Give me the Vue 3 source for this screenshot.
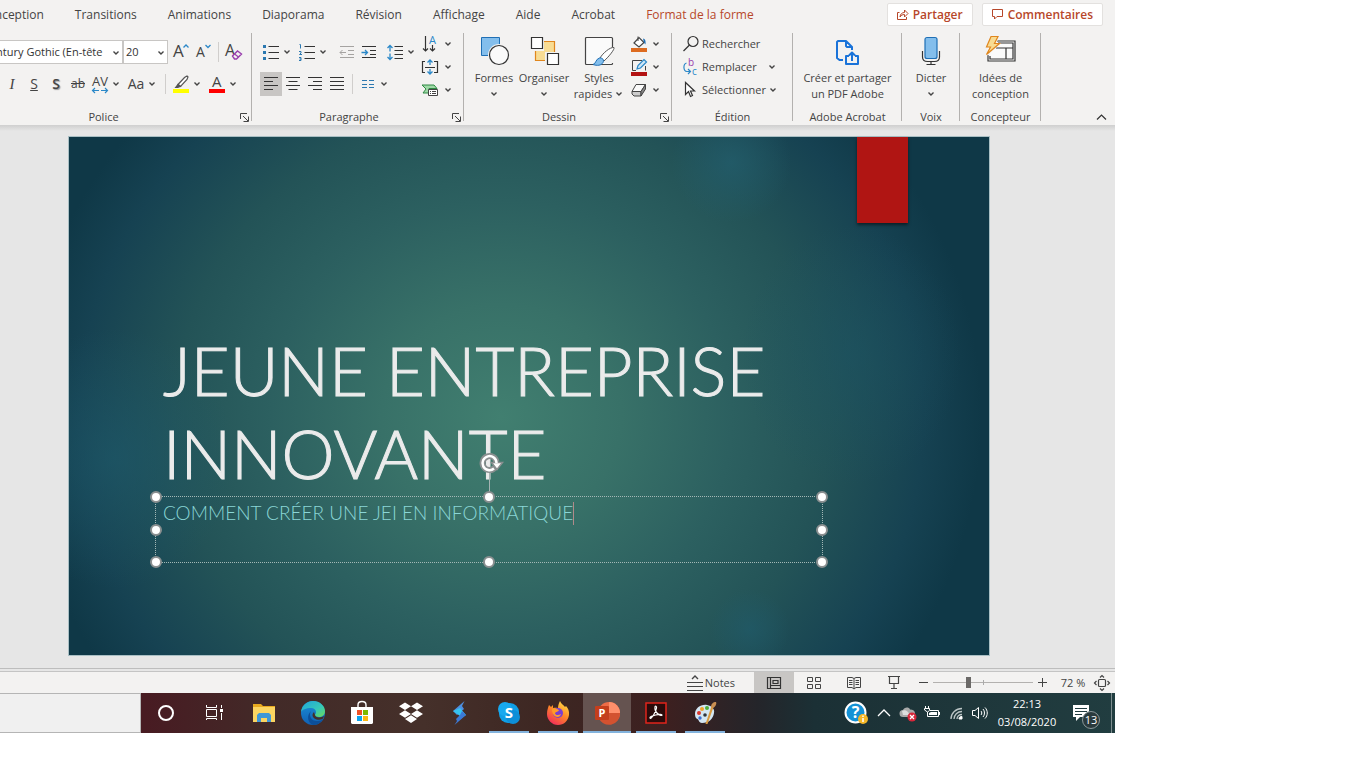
<script setup>
import { ref } from 'vue'

const tabs = ['Conception', 'Transitions', 'Animations', 'Diaporama', 'Révision', 'Affichage', 'Aide', 'Acrobat', 'Format de la forme']
const activeTab = ref('Format de la forme')

const view = ref('normal')
const zoom = ref(35)
const align = ref('left')

const handles = ['nw', 'n', 'ne', 'w', 'e', 'sw', 's', 'se']
</script>

<template>
  <!-- shared glyphs -->
  <svg class="sprite" aria-hidden="true">
    <symbol id="caret" viewBox="-1 -1 10 10"><path d="M1.500 2.500 4 5l2.500-2.500" fill="none" stroke="#444" stroke-width="1.400" /></symbol>
    <symbol id="launcher" viewBox="0 0 9 9"><path d="M.5 6V.5H7M3 3l5 5M8.500 3.500v5h-5" fill="none" stroke="#444" /></symbol>
  </svg>

  <div class="app">
    <header class="tabs">
      <nav class="tab-list">
        <a v-for="tab in tabs" :key="tab" href="#" :class="{ active: tab === activeTab }" @click.prevent="activeTab = tab">{{ tab }}</a>
      </nav>
      <div class="share">
        <button type="button">
          <svg width="13" height="13" viewBox="0 0 13 13" fill="none" stroke="#b7472a"><path d="M3.500 4.500h-2v7h9V9M4 9c.3-3 2-4.500 4.500-4.500V2L12 5.500 8.500 9V6.500C6.500 6.500 5 7.300 4 9z" /></svg>
          Partager
        </button>
        <button type="button">
          <svg width="13" height="13" viewBox="0 0 13 13" fill="none" stroke="#b7472a"><path d="M1.500 1.500h10v7H6L3.500 11V8.500h-2z" /></svg>
          Commentaires
        </button>
      </div>
    </header>

    <div class="ribbon">
      <!-- Police -->
      <section class="group font-group">
        <div class="body rows">
          <div class="row font-row">
            <div class="combo font-name">
              <select aria-label="Police"><option>Century Gothic (En-tête</option></select>
              <svg class="caret"><use href="#caret" /></svg>
            </div>
            <div class="combo font-size">
              <select aria-label="Taille de police"><option>20</option></select>
              <svg class="caret"><use href="#caret" /></svg>
            </div>
            <button class="tool" type="button" aria-label="Augmenter la taille">
              <svg width="20" height="20" viewBox="0 0 20 20"><text x="2" y="15" font-size="17" fill="#444">A</text><path d="m12.500 5.500 2.500-2.500 2.500 2.500" fill="none" stroke="#2b88c8" stroke-width="1.300" /></svg>
            </button>
            <button class="tool" type="button" aria-label="Réduire la taille">
              <svg width="20" height="20" viewBox="0 0 20 20"><text x="3" y="15" font-size="14" fill="#444">A</text><path d="m12.500 3 2.500 2.500L17.500 3" fill="none" stroke="#2b88c8" stroke-width="1.300" /></svg>
            </button>
            <i class="sep"></i>
            <button class="tool" type="button" aria-label="Effacer la mise en forme">
              <svg width="20" height="20" viewBox="0 0 20 20"><text x="1" y="14" font-size="16" fill="#444">A</text><path d="m8.500 14 5-5 4 3-5 5h-2z" fill="#f3f2f1" stroke="#9a3fae" stroke-width="1.400" /><path d="m10.500 12 4 3" stroke="#9a3fae" stroke-width="1.300" /></svg>
            </button>
          </div>
          <div class="row style-row">
            <button class="tool italic" type="button">I</button>
            <button class="tool underline" type="button">S</button>
            <button class="tool shadow" type="button">S</button>
            <button class="tool strike" type="button">ab</button>
            <button class="tool" type="button" aria-label="Espacement des caractères">
              <svg width="20" height="20" viewBox="0 0 20 20"><text x="2" y="12" font-size="13" fill="#444">AV</text><path d="M2.500 16.500H9M5 14l-2.500 2.500L5 19M11 16.500h6.500M15 14l2.500 2.500L15 19" fill="none" stroke="#2b88c8" stroke-width="1.200" /></svg>
            </button>
            <svg class="caret"><use href="#caret" /></svg>
            <button class="tool case" type="button">Aa</button>
            <svg class="caret"><use href="#caret" /></svg>
            <i class="sep"></i>
            <button class="tool" type="button" aria-label="Surlignage">
              <svg width="20" height="20" viewBox="0 0 20 20"><path d="M7 10.500 13.500 3.500 16 2l1 1-1 2.500-6.500 7z" fill="#fff" stroke="#555" stroke-width="1.200" /><path d="m7 9.500 3.500 3L7 14H3.500z" fill="#555" /><path d="M2 15h16v4H2z" fill="#ff0" /></svg>
            </button>
            <svg class="caret"><use href="#caret" /></svg>
            <button class="tool color" type="button" aria-label="Couleur de police">
              <svg width="20" height="20" viewBox="0 0 20 20"><text x="5" y="13" font-size="15" fill="#444">A</text><path d="M2 15h16v4H2z" fill="#f00" /></svg>
            </button>
            <svg class="caret"><use href="#caret" /></svg>
          </div>
        </div>
        <footer><span>Police</span><svg class="launcher"><use href="#launcher" /></svg></footer>
      </section>

      <!-- Paragraphe -->
      <section class="group para-group">
        <div class="body split">
          <div class="rows para-rows">
            <div class="row">
              <button class="tool" type="button" aria-label="Puces">
                <svg width="18" height="18" viewBox="0 0 18 18"><path d="M1 2h3v3H1zM1 8h3v3H1zM1 14h3v3H1z" fill="#2b78b0" /><path d="M6.500 3.500H17M6.500 9.500H17M6.500 15.500H17" stroke="#333" /></svg>
              </button>
              <svg class="caret"><use href="#caret" /></svg>
              <button class="tool gap" type="button" aria-label="Numérotation">
                <svg width="18" height="18" viewBox="0 0 18 18" fill="none"><path d="M1.500 1.500h1v4M1 8.500h2v1.500L1.500 11.500H4M1 14.500h2v3H1M1.500 16H3" stroke="#2b78b0" /><path d="M6.500 3.500H17M6.500 9.500H17M6.500 15.500H17" stroke="#333" /></svg>
              </button>
              <svg class="caret"><use href="#caret" /></svg>
              <button class="tool wide-gap" type="button" disabled aria-label="Réduire le retrait">
                <svg width="18" height="18" viewBox="0 0 18 18" fill="none" stroke="#a5a3a1"><path d="M2 3.500h14M10 7.500h6M10 11.500h6M2 14.500h14M8 9.500H2M4.500 7 2 9.500 4.500 12" /></svg>
              </button>
              <button class="tool" type="button" aria-label="Augmenter le retrait">
                <svg width="18" height="18" viewBox="0 0 18 18" fill="none" stroke="#333"><path d="M2 3.500h14M10 7.500h6M10 11.500h6M2 14.500h14" /><path d="M1.500 9.500h6M5 7l2.500 2.500L5 12" stroke="#2b88c8" stroke-width="1.300" /></svg>
              </button>
              <button class="tool gap" type="button" aria-label="Interligne">
                <svg width="18" height="18" viewBox="0 0 18 18" fill="none"><path d="M8.500 3.500H17M8.500 7.500H17M8.500 11.500H17M8.500 15.500H17" stroke="#333" /><path d="M4 2.500v6M1.500 5 4 2.500 6.500 5M4 10.500v6M1.500 14 4 16.500 6.500 14" stroke="#2b88c8" stroke-width="1.300" /></svg>
              </button>
              <svg class="caret"><use href="#caret" /></svg>
            </div>
            <div class="row">
              <button class="tool" type="button" aria-label="Aligner à gauche" :class="{ on: align === 'left' }" @click="align = 'left'">
                <svg width="18" height="18" viewBox="0 0 18 18" stroke="#333"><path d="M2 2.500h14M2 6.500h9M2 10.500h14M2 14.500h9" /></svg>
              </button>
              <button class="tool" type="button" aria-label="Centrer" :class="{ on: align === 'center' }" @click="align = 'center'">
                <svg width="18" height="18" viewBox="0 0 18 18" stroke="#333"><path d="M2 2.500h14M4.500 6.500h9M2 10.500h14M4.500 14.500h9" /></svg>
              </button>
              <button class="tool" type="button" aria-label="Aligner à droite" :class="{ on: align === 'right' }" @click="align = 'right'">
                <svg width="18" height="18" viewBox="0 0 18 18" stroke="#333"><path d="M2 2.500h14M7 6.500h9M2 10.500h14M7 14.500h9" /></svg>
              </button>
              <button class="tool" type="button" aria-label="Justifier" :class="{ on: align === 'justify' }" @click="align = 'justify'">
                <svg width="18" height="18" viewBox="0 0 18 18" stroke="#333"><path d="M2 2.500h14M2 6.500h14M2 10.500h14M2 14.500h14" /></svg>
              </button>
              <i class="sep"></i>
              <button class="tool" type="button" aria-label="Colonnes">
                <svg width="18" height="18" viewBox="0 0 18 18" stroke="#2b78b0"><path d="M3 5.500h5M3 9.500h5M3 12.500h5M10 5.500h5M10 9.500h5M10 12.500h5" /></svg>
              </button>
              <svg class="caret"><use href="#caret" /></svg>
            </div>
          </div>
          <div class="stack">
            <button type="button" class="mini" aria-label="Orientation du texte">
              <svg width="18" height="18" viewBox="0 0 18 18" fill="none"><path d="M4.500 1v15M2 13.500 4.500 16 7 13.500M11.500 10v6M9 13.500l2.500 2.500 2.500-2.500" stroke="#333" stroke-width="1.200" /><text x="8" y="9" font-size="11" fill="#2b88c8">A</text></svg>
              <svg class="caret"><use href="#caret" /></svg>
            </button>
            <button type="button" class="mini" aria-label="Aligner le texte">
              <svg width="18" height="18" viewBox="0 0 18 18" fill="none"><path d="M4 3.500H1.500v11H4M13 3.500h3.500v11H13M4 9.500h10" stroke="#333" stroke-width="1.200" /><path d="M9 2v5M6.500 4.500 9 2l2.500 2.500M9 11v5M6.500 13.500 9 16l2.500-2.500" stroke="#2b88c8" stroke-width="1.300" /></svg>
              <svg class="caret"><use href="#caret" /></svg>
            </button>
            <button type="button" class="mini" aria-label="Convertir en graphique SmartArt">
              <svg width="18" height="18" viewBox="0 0 18 18"><path d="M1 4h12l3 3.500H8V12H2l3-4z" fill="#9fd9a7" stroke="#2f8a44" /><path d="M7.500 8.500h9v6h-9z" fill="#fff" stroke="#444" /><path d="M9 10.500h1M11 10.500h4M9 12.500h1M11 12.500h4" stroke="#444" /></svg>
              <svg class="caret"><use href="#caret" /></svg>
            </button>
          </div>
        </div>
        <footer><span>Paragraphe</span><svg class="launcher"><use href="#launcher" /></svg></footer>
      </section>

      <!-- Dessin -->
      <section class="group draw-group">
        <div class="body split">
          <button type="button" class="big">
            <svg width="32" height="32" viewBox="0 0 32 32"><path d="M3.500 1.500h18v18h-18z" fill="#83beec" stroke="#1f6fb5" /><circle cx="21" cy="19" r="11" fill="#f3f2f1" /><circle cx="21" cy="19" r="9.500" fill="#fafafa" stroke="#333" stroke-width="1.200" /></svg>
            <span>Formes</span>
            <svg class="caret"><use href="#caret" /></svg>
          </button>
          <button type="button" class="big">
            <svg width="32" height="32" viewBox="0 0 32 32"><path d="M7.500 5.500h19v19h-19z" fill="#f8dc93" stroke="#e0861d" stroke-width="1.200" /><path d="M2.500 1.500h12v12h-12zM18.500 17.500h12v12h-12z" fill="#f3f2f1" stroke="#f3f2f1" stroke-width="3" /><path d="M3.500 1.500h11v11h-11zM19.500 17.500h11v11h-11z" fill="#fff" stroke="#333" stroke-width="1.200" /></svg>
            <span>Organiser</span>
            <svg class="caret"><use href="#caret" /></svg>
          </button>
          <button type="button" class="big styles">
            <svg width="32" height="32" viewBox="0 0 32 32"><rect x="2.500" y="1.500" width="27" height="27" rx="1" fill="#fafafa" stroke="#444" stroke-width="1.200" /><path d="M16 23 31 10v17H15z" fill="#f3f2f1" /><path d="M17 22C20 17 27 11 31 11.500c1 1.500-5 9-10 13.500z" fill="#fff" stroke="#555" /><path d="M10 28.500c3-.5 2.500-5.500 6.500-6.500 3-.5 5 2 3.500 4.500-1.500 3-6 3.500-10 2z" fill="#83beec" stroke="#1f6fb5" /></svg>
            <span>Styles</span>
            <span class="with-caret">rapides<svg class="caret"><use href="#caret" /></svg></span>
          </button>
          <div class="stack">
            <button type="button" class="mini" aria-label="Remplissage">
              <svg width="18" height="18" viewBox="0 0 18 18"><path d="m4 8 5-5.500 5 5-5 4.500z" fill="#fff" stroke="#444" stroke-width="1.200" /><path d="M8 6V1.500" stroke="#444" /><path d="M13 3.500c2 0 3 2 2.500 6-1.500-1-2-4-2.500-6z" fill="#1f6fb5" /><path d="M1 13h16v4H1z" fill="#dd6b20" /></svg>
              <svg class="caret"><use href="#caret" /></svg>
            </button>
            <button type="button" class="mini" aria-label="Contour">
              <svg width="18" height="18" viewBox="0 0 18 18"><path d="M12 2.500H2.500v10H6M15.500 8v4.500" fill="none" stroke="#444" /><path d="m7 11 1-3.500 6-6 2.500 2.500-6 6z" fill="#cfe6f7" stroke="#2b88c8" stroke-width="1.200" /><path d="M1 14h16v4H1z" fill="#b31212" /></svg>
              <svg class="caret"><use href="#caret" /></svg>
            </button>
            <button type="button" class="mini" aria-label="Effets">
              <svg width="18" height="18" viewBox="0 0 18 18" stroke="#444" stroke-linejoin="round"><path d="M6 3.500h9.500l-4.500 7H2z" fill="#fafafa" /><path d="M2 10.500h9v4.500H4L2 13z" fill="#ccc" /><path d="m11 10.500 4.500-7V8L11 15z" fill="#888" /></svg>
              <svg class="caret"><use href="#caret" /></svg>
            </button>
          </div>
        </div>
        <footer><span>Dessin</span><svg class="launcher"><use href="#launcher" /></svg></footer>
      </section>

      <!-- Édition -->
      <section class="group edit-group">
        <div class="body stack">
          <button type="button" class="mini">
            <svg width="18" height="18" viewBox="0 0 18 18" fill="none" stroke="#333" stroke-width="1.200"><circle cx="11" cy="6.500" r="5" /><path d="M7.500 10 1.500 16" /></svg>
            Rechercher
          </button>
          <button type="button" class="mini wide">
            <svg width="18" height="18" viewBox="0 0 18 18"><text x="6" y="8" font-size="10" fill="#9a3fae">b</text><text x="10" y="17" font-size="10" fill="#2b88c8">c</text><path d="M4.500 5C1 6 1 13 5 13.500h3M6 11l2.500 2.500L6 16" fill="none" stroke="#2b88c8" stroke-width="1.200" /></svg>
            Remplacer
            <svg class="caret"><use href="#caret" /></svg>
          </button>
          <button type="button" class="mini">
            <svg width="18" height="18" viewBox="0 0 18 18"><path d="M3.500 1.500v12l3-3 2 5 2-1-2-4.500h4z" fill="#fff" stroke="#333" stroke-width="1.200" /></svg>
            Sélectionner
            <svg class="caret"><use href="#caret" /></svg>
          </button>
        </div>
        <footer><span>Édition</span></footer>
      </section>

      <section class="group acrobat-group">
        <div class="body split">
          <button type="button" class="big">
            <svg width="32" height="32" viewBox="0 0 32 32" fill="none" stroke="#1a73d9" stroke-width="2" stroke-linejoin="round"><path d="M12 24H8.500L6 22V6l1-1h8l6 6v3M15 5v5l1 1h5M18 20h-3v8h12v-8h-3M21 25v-8M18 19.500l3-3 3 3" /></svg>
            <span>Créer et partager</span>
            <span>un PDF Adobe</span>
          </button>
        </div>
        <footer><span>Adobe Acrobat</span></footer>
      </section>

      <section class="group voice-group">
        <div class="body split">
          <button type="button" class="big">
            <svg width="32" height="32" viewBox="0 0 32 32" fill="none" stroke="#333" stroke-width="1.200"><rect x="10" y="1.500" width="12" height="21" rx="2" fill="#83beec" stroke="#1f6fb5" /><path d="M7.500 15v6c0 3 2 4.500 5 4.500h7c3 0 5-1.500 5-4.500v-6M16 25.500v3M11.500 28.500h9" /></svg>
            <span>Dicter</span>
            <svg class="caret"><use href="#caret" /></svg>
          </button>
        </div>
        <footer><span>Voix</span></footer>
      </section>

      <section class="group ideas-group">
        <div class="body split">
          <button type="button" class="big">
            <svg width="32" height="32" viewBox="0 0 32 32" fill="none"><path d="M4 5h26v20H2V17z" fill="#fafafa" /><path d="M12 5h18v20H3v-6M13 7h15v16H5v-3M11 12h17M21 12v11" stroke="#333" stroke-width="1.200" /><path d="M6-.5h9.500L11 7h5L2.500 20 6 11.500H1z" fill="#f3f2f1" /><path d="M6 .500h7L9.500 7.500h5L1.500 18.500 5.500 11H1.500z" fill="#f8dc93" stroke="#e0861d" stroke-width="1.200" /></svg>
            <span>Idées de</span>
            <span>conception</span>
          </button>
        </div>
        <footer><span>Concepteur</span></footer>
      </section>

      <button type="button" class="collapse" aria-label="Réduire le ruban">
        <svg width="11" height="8" viewBox="0 0 11 8"><path d="m1 6.500 4.500-4.500L10 6.500" fill="none" stroke="#333" stroke-width="1.200" /></svg>
      </button>
    </div>

    <main class="workspace">
      <article class="slide">
        <div class="ribbon-mark"></div>
        <h1>JEUNE ENTREPRISE<br />INNOVANTE</h1>
        <div class="textbox">
          <p>COMMENT CRÉER UNE JEI EN INFORMATIQUE<i class="cursor"></i></p>
          <i class="stem"></i>
          <svg class="rotate" width="24" height="24" viewBox="0 0 24 24" fill="none"><path d="M17 15.500A7 7 0 1 1 18.500 10" stroke="#8a8f90" stroke-width="6" /><path d="M13.500 10.500h11l-5.500 7z" fill="#fff" stroke="#8a8f90" stroke-width="1.500" /><path d="M16 16.500A7 7 0 1 1 18.500 11" stroke="#fff" stroke-width="2.500" /></svg>
          <i v-for="h in handles" :key="h" class="handle" :class="h"></i>
        </div>
      </article>
    </main>

    <div class="status">
      <button type="button" class="notes">
        <svg width="16" height="18" viewBox="0 0 16 18" fill="none" stroke="#444"><path d="M0 8.500h16M0 12.500h16M0 16.500h16" /><path d="M5 5l3-3 3 3" stroke-width="1.400" /></svg>
        Notes
      </button>
      <button type="button" class="view" aria-label="Normal" :class="{ on: view === 'normal' }" @click="view = 'normal'">
        <svg width="16" height="16" viewBox="0 0 16 16" fill="none" stroke="#333" stroke-width="1.200"><path d="M1.500 2.500h13v11h-13zM4.500 2.500v11M4.500 10.500h10M7 5.500h5v3H7z" /></svg>
      </button>
      <button type="button" class="view" aria-label="Trieuse de diapositives" :class="{ on: view === 'sorter' }" @click="view = 'sorter'">
        <svg width="16" height="16" viewBox="0 0 16 16" fill="none" stroke="#444"><path d="M1.500 2.500h5v4h-5zM9.500 2.500h5v4h-5zM1.500 9.500h5v4h-5zM9.500 9.500h5v4h-5z" /></svg>
      </button>
      <button type="button" class="view" aria-label="Mode Lecture" :class="{ on: view === 'reading' }" @click="view = 'reading'">
        <svg width="16" height="16" viewBox="0 0 16 16" fill="none" stroke="#444"><path d="M1.500 2.500H6L8 3.500l2-1h4.500v10H10L8 14l-2-1.500H1.500zM8 3.500V14M3 5.500h3.500M3 7.500h3.500M3 9.500h3.500M9.500 5.500H13M9.500 7.500H13M9.500 9.500H13" /></svg>
      </button>
      <button type="button" class="view" aria-label="Diaporama" :class="{ on: view === 'show' }" @click="view = 'show'">
        <svg width="16" height="16" viewBox="0 0 16 16" fill="none" stroke="#444"><path d="M2 1.500h12M3.500 1.500v7h9v-7M8 8.500v5M5 13.500h6" stroke-width="1.200" /></svg>
      </button>
      <button type="button" class="step" aria-label="Zoom arrière"><svg width="9" height="9" viewBox="0 0 9 9"><path d="M0 4.500h9" stroke="#444" /></svg></button>
      <input v-model="zoom" class="zoom" type="range" min="0" max="100" aria-label="Zoom" />
      <button type="button" class="step" aria-label="Zoom avant"><svg width="9" height="9" viewBox="0 0 9 9"><path d="M0 4.500h9M4.500 0v9" stroke="#444" /></svg></button>
      <span class="percent">72 %</span>
      <button type="button" class="fit" aria-label="Ajuster à la fenêtre">
        <svg width="16" height="16" viewBox="0 0 16 16" fill="none" stroke="#444" stroke-width="1.200"><rect x="4.500" y="4.500" width="7" height="7" rx="1" /><path d="m6 2.500 2-2 2 2M6 13.500l2 2 2-2M2.500 6l-2 2 2 2M13.500 6l2 2-2 2" /></svg>
      </button>
    </div>

    <footer class="taskbar">
      <input class="search" type="search" aria-label="Rechercher" />
      <button type="button" class="task" aria-label="Cortana"><svg width="24" height="24" viewBox="0 0 24 24"><circle cx="12" cy="12" r="7" fill="none" stroke="#fff" stroke-width="2" /></svg></button>
      <button type="button" class="task" aria-label="Affichage des tâches"><svg width="24" height="24" viewBox="0 0 24 24" fill="none" stroke="#fff"><path d="M3.500 4v2.500h10V4M3.500 8.500h10v7h-10zM3.500 19v-1.500h10V19M18.500 4v3M18.500 12v7" /><path d="M17 8h3v3h-3z" fill="#fff" stroke="none" /></svg></button>
      <button type="button" class="task" aria-label="Explorateur de fichiers"><svg width="24" height="24" viewBox="0 0 24 24"><path d="M1 3h8l2 2h12v16H1z" fill="#e8a91f" /><path d="M1 6h22v15H1z" fill="#fbd562" /><path d="M5 21v-7l2-2h10l2 2v7h-4v-4H9v4z" fill="#3f98d8" /></svg></button>
      <button type="button" class="task" aria-label="Microsoft Edge">
        <svg width="24" height="24" viewBox="0 0 24 24">
          <defs>
            <linearGradient id="edge-a" x1="0" y1="0" x2="1" y2="1"><stop offset="0" stop-color="#1fa3dc" /><stop offset=".6" stop-color="#36c9b8" /><stop offset="1" stop-color="#6fdc55" /></linearGradient>
            <linearGradient id="edge-b" x1="0" y1="0" x2="0" y2="1"><stop offset="0" stop-color="#1b8fd8" /><stop offset="1" stop-color="#1160b4" /></linearGradient>
          </defs>
          <circle cx="12" cy="12" r="12" fill="url(#edge-b)" />
          <path d="M0 11C1 4 6 0 12 0c7 0 12 5 12 10 0 4-3 6-6 6-2 0-4-1-4-2 0-.5 1-1 1-3 0-2-2-4-5-4C5 7 1 9 0 11z" fill="url(#edge-a)" />
          <path d="M10 10c-3 5 1 11 7 10 2 0 4-1 5-2-2 4-6 6-10 6C7 22 5 15 10 10z" fill="#0c4f9a" />
          <path d="M14 14c0 3 6 3 9.500 1L21.500 18c-4 2-10 0-10-4 0-1 .5-2 1.500-3z" fill="#43302a" />
        </svg>
      </button>
      <button type="button" class="task" aria-label="Microsoft Store"><svg width="24" height="24" viewBox="0 0 24 24"><path d="M8 7V4c0-2 1.500-3.500 4-3.500S16 2 16 4v3" fill="none" stroke="#fff" stroke-width="1.400" /><path d="M1 6h22v16l-1 1H2l-1-1z" fill="#fff" /><path d="M7 9h5v5H7z" fill="#f05125" /><path d="M13 9h5v5h-5z" fill="#7eb900" /><path d="M7 15h5v5H7z" fill="#0aa4ee" /><path d="M13 15h5v5h-5z" fill="#fdb813" /></svg></button>
      <button type="button" class="task" aria-label="Dropbox"><svg width="24" height="24" viewBox="0 0 24 24"><path d="m6 1.500 6 3.800-6 3.800-6-3.800zM18 1.500l6 3.800-6 3.800-6-3.800zM6 9.200l6 3.800-6 3.800L0 13zM18 9.200l6 3.800-6 3.800-6-3.800zM12 14.300l6 3.700-6 4-6-4z" fill="#fff" /></svg></button>
      <button type="button" class="task" aria-label="Éclair"><svg width="24" height="24" viewBox="0 0 24 24"><path d="M16.500 0 5 10l4 4 7-6-2-3z" fill="#4d8fe0" /><path d="M5 10l7-3 6 7-7 5-2-1 3-3z" fill="#35c4f0" /><path d="M6.500 24 18 14l-4-4-2 4-4 4 1 2z" fill="#3b79d5" /></svg></button>
      <button type="button" class="task open" aria-label="Skype"><svg width="24" height="24" viewBox="0 0 24 24"><rect x="2" y="2" width="20" height="20" rx="9" fill="#0f9fe6" /><circle cx="8" cy="8" r="7" fill="#18a9ef" /><circle cx="16" cy="16" r="7" fill="#0d8fd8" /><text x="12" y="17" font-size="15" font-weight="700" fill="#fff" text-anchor="middle">S</text></svg></button>
      <button type="button" class="task open" aria-label="Firefox">
        <svg width="24" height="24" viewBox="0 0 24 24">
          <defs><linearGradient id="fox" x1=".8" y1="0" x2=".2" y2="1"><stop offset="0" stop-color="#ffe14a" /><stop offset=".45" stop-color="#ff8a25" /><stop offset="1" stop-color="#f0265f" /></linearGradient></defs>
          <path d="M14 0c1 3 4 4 5 6l1-1c2 2 3.500 5 3 9-1 6-5 10-11 10S1 19 1 13c0-4 1-6 2-9l2 2 2-2v3c2-.5 3-.5 5 0 0-3 1-5 2-7z" fill="url(#fox)" />
          <circle cx="12" cy="12" r="5" fill="#7a3fd0" /><path d="M6 8c3-1 6 0 7 1.500-1 1.500-3 1-4 2.500 0 2 3 3 6 1-1 5-9 4-9-5z" fill="#ff9a2a" />
        </svg>
      </button>
      <button type="button" class="task open active" aria-label="PowerPoint"><svg width="26" height="24" viewBox="0 0 26 24"><circle cx="15" cy="12" r="11" fill="#ed6c47" /><path d="M15 1a11 11 0 0 1 11 11H15z" fill="#ff8f6b" /><path d="M4.500 16A11 11 0 0 0 26 12H15z" fill="#d35230" /><rect x="1" y="5" width="14" height="14" rx="1" fill="#c43e1c" /><text x="8" y="16" font-size="11" font-weight="700" fill="#fff" text-anchor="middle">P</text></svg></button>
      <button type="button" class="task open" aria-label="Acrobat"><svg width="24" height="24" viewBox="0 0 24 24" fill="none"><path d="M2 2h20v20H2z" fill="#2a0b0b" stroke="#e0241b" stroke-width="1.500" /><path d="M6 17c-1-2 12-5 12-3 0 2-8-2-7-8 0-1.500 2-1 1.500 1C12 11 7 19 6 17z" stroke="#fff" stroke-width="1.200" /></svg></button>
      <button type="button" class="task open" aria-label="Paint"><svg width="24" height="24" viewBox="0 0 24 24"><path d="M2 13C2 7 8 3 14 4c5 1 8 4 7 8-1 6-5 10-12 10-3 0-3-3-4.500-4C3 17.500 2 16 2 13z" fill="#d3e6f2" /><circle cx="6" cy="12" r="2" fill="#d9382e" /><circle cx="9" cy="8" r="2" fill="#f2a32b" /><circle cx="14" cy="7" r="2" fill="#4fae3a" /><circle cx="7" cy="17" r="1.700" fill="#3d6fd0" /><circle cx="12" cy="14" r="1.800" fill="#31363a" /><path d="m12.500 23 6-18 2 1-6 17z" fill="#d99a3e" /><path d="M18 6c0-3 2-5 5-5 1 2-1 5-3 6z" fill="#c98f52" /></svg></button>

      <div class="tray">
        <svg class="help" width="24" height="24" viewBox="0 0 24 24"><circle cx="11.500" cy="11.500" r="10" fill="#1491d5" stroke="#fff" stroke-width="2" /><text x="11.500" y="17" font-size="16" font-weight="700" fill="#fff" text-anchor="middle">?</text><circle cx="19" cy="18" r="5" fill="#f4b728" /><path d="M19 17v4M19 14.500V16" stroke="#fff" stroke-width="1.500" /></svg>
        <svg width="18" height="18" viewBox="0 0 18 18"><path d="m3 12 6-6 6 6" fill="none" stroke="#fff" stroke-width="1.300" /></svg>
        <svg width="18" height="18" viewBox="0 0 18 18"><path d="M4 13a3.500 3.500 0 0 1 0-7c1-3 6-3.500 7-.5 3 0 5 1.500 5 4s-1 3.500-3 3.500z" fill="#aaa" /><path d="M3 7c3-2 6 0 8 4H4" fill="#ddd" /><circle cx="13" cy="13" r="4.500" fill="#d7263a" /><path d="m11 11 4 4M15 11l-4 4" stroke="#fff" stroke-width="1.300" /></svg>
        <svg width="18" height="18" viewBox="0 0 18 18" fill="none" stroke="#fff"><path d="M7 6.500h8.500v6h-11V10M16.500 8v3" /><path d="M8 8h6v3H6V9z" fill="#fff" stroke="none" /><path d="M2.500 2v2M5.500 2v2M1.500 4.500h5v2l-2 1.500V10M1.500 4.500V6l3 2" /></svg>
        <svg width="18" height="18" viewBox="0 0 18 18" fill="none" stroke="#bcc5c6"><path d="M4 15C4 9 9 4.500 15 4.500M7 15c0-4 3.500-7.500 8-7.500M10 15c0-2.500 2-4.500 5-4.500" stroke-width="1.300" /><path d="M12 15c0-2 1-2.500 3-2.500V15z" fill="#fff" stroke="#fff" /></svg>
        <svg width="18" height="18" viewBox="0 0 18 18" fill="none" stroke="#fff"><path d="M1.500 6.500H4L7.500 3.500v11L4 11.500H1.500zM10 7c1 1 1 3 0 4M12 5c2 2 2 6 0 8M14 3.500c3 3 3 8 0 11" /></svg>
        <time class="clock"><span>22:13</span><span>03/08/2020</span></time>
        <button type="button" class="notif" aria-label="Notifications">
          <svg width="18" height="18" viewBox="0 0 18 18"><path d="M1 1h16v12H8l-4 4v-4H1z" fill="#fff" /><path d="M3 4.500h12M3 7.500h12M3 10.500h7" stroke="#203b3f" /></svg>
          <b>13</b>
        </button>
        <i class="desktop"></i>
      </div>
    </footer>
  </div>
</template>

<style>
body {
  margin: 0;
  background: #fff;
}
</style>

<style scoped>
* {
  box-sizing: border-box;
}
.sprite {
  display: none;
}
.app {
  margin-right: 251px;
  overflow: hidden;
  font-family: 'Open Sans', 'Noto Sans', sans-serif;
  font-size: 12px;
  line-height: 16px;
  color: #444;
  background: #f3f2f1;
}
button {
  display: flex;
  align-items: center;
  justify-content: center;
  padding: 0;
  border: 0;
  background: none;
  font: inherit;
  color: inherit;
}
svg {
  flex: none;
  display: block;
  overflow: visible;
}
i {
  font-style: normal;
}

/* tabs */
.tabs {
  display: flex;
  justify-content: space-between;
  height: 32px;
  padding-right: 12px;
}
.tab-list {
  display: flex;
  gap: 31px;
  margin-left: -20px;
  line-height: 29px;
}
.tab-list a {
  color: #444;
  text-decoration: none;
  white-space: nowrap;
}
.tab-list a.active {
  color: #b7472a;
}
.share {
  display: flex;
  gap: 9px;
  padding: 3px 0 6px;
}
.share button {
  gap: 4px;
  padding: 0 9px 0 8px;
  border: 1px solid #e3e1df;
  border-radius: 2px;
  background: #fff;
  color: #b7472a;
  font-weight: 600;
}

/* ribbon */
.ribbon {
  display: flex;
  height: 93px;
  font-size: 11px;
}
.group {
  display: flex;
  flex: none;
  flex-direction: column;
  background: linear-gradient(#b3b1af, #b3b1af) right 1px / 1px 88px no-repeat;
}
.font-group { width: 297px; margin-left: -45px; }
.para-group { width: 212px; }
.draw-group { width: 208px; }
.edit-group { width: 121px; }
.acrobat-group { width: 109px; }
.voice-group { width: 58px; }
.ideas-group { width: 81px; }
.body {
  height: 77px;
}
.group footer {
  position: relative;
  text-align: center;
}
.para-group footer,
.draw-group footer {
  padding-right: 18px;
}
.launcher {
  position: absolute;
  right: 3px;
  top: 4px;
  width: 9px;
  height: 9px;
}
.caret {
  width: 10px;
  height: 10px;
}
.split {
  display: flex;
}
.rows {
  display: flex;
  flex-direction: column;
  gap: 8px;
  padding-top: 8px;
}
.row {
  display: flex;
  align-items: center;
  height: 24px;
}
.font-row { padding-left: 25px; }
.style-row { padding-left: 46px; }
.style-row .sep { margin-left: 8px; }
.para-rows { width: 169px; padding-left: 8px; }
.tool {
  width: 22px;
  height: 24px;
}
.tool.on {
  background: #c8c6c4;
}
.gap {
  margin-left: 4px;
}
.wide-gap {
  margin-left: 8px;
}
.sep {
  width: 1px;
  height: 20px;
  margin: 0 4px;
  background: #d0cecc;
}
.combo {
  position: relative;
  display: flex;
  height: 24px;
  border: 1px solid #c8c6c4;
  background: #fff;
}
.combo select {
  width: 100%;
  padding: 0 0 0 2px;
  border: 0;
  appearance: none;
  background: none;
  font: inherit;
  color: #333;
}
.combo .caret {
  position: absolute;
  right: 1px;
  top: 7px;
}
.font-name { width: 143px; }
.font-size { width: 45px; margin-right: 2px; }
.italic { font-family: 'Liberation Serif', serif; font-size: 15px; font-style: italic; }
.underline { font-size: 14px; text-decoration: underline; }
.shadow { font-size: 14px; font-weight: 600; text-shadow: 1px 1px 1px #999; }
.strike { font-size: 12px; text-decoration: line-through; }
.case { margin-left: 4px; font-size: 14px; }
.color { margin-left: 4px; }

.stack {
  display: flex;
  flex-direction: column;
}
.mini {
  justify-content: flex-start;
  height: 23px;
  gap: 2px;
}
.para-group .mini {
  gap: 4px;
}
.draw-group .stack {
  padding-left: 1px;
}
.draw-group .mini {
  gap: 3px;
}
.edit-group .stack {
  padding-left: 10px;
}
.edit-group .wide .caret {
  margin-left: 8px;
}
.big {
  flex-direction: column;
  justify-content: flex-start;
  align-self: flex-start;
  padding-top: 4px;
  white-space: nowrap;
}
.big > svg:first-child {
  margin-bottom: 2px;
}
.big > .caret {
  margin-top: 3px;
}
.with-caret {
  display: flex;
  align-items: center;
  gap: 2px;
}
.draw-group .split {
  padding-left: 5px;
}
.draw-group .big {
  width: 50px;
}
.draw-group .styles {
  width: 60px;
}
.acrobat-group .split,
.voice-group .split,
.ideas-group .split {
  justify-content: center;
}
.collapse {
  align-self: flex-end;
  width: 20px;
  height: 16px;
  margin: 0 4px 0 auto;
}

/* slide area */
.workspace {
  padding: 11px 125px 12px 68px;
  border-bottom: 1px solid #bdbdbd;
  background: linear-gradient(#cfcfcf, #e6e6e6 6px);
}
.slide {
  position: relative;
  aspect-ratio: 461 / 260;
  border: 1px solid #a9bfc4;
  background:
    radial-gradient(circle 60px at 72% 5%, rgba(35, 95, 110, 0.7), rgba(35, 95, 110, 0)),
    radial-gradient(circle 40px at 74% 95%, rgba(32, 92, 108, 0.6), rgba(32, 92, 108, 0)),
    radial-gradient(ellipse 110px 130px at 85% 42%, rgba(28, 84, 100, 0.5), rgba(28, 84, 100, 0)),
    radial-gradient(ellipse 120px 130px at 5% 62%, rgba(30, 90, 108, 0.6), rgba(30, 90, 108, 0)),
    radial-gradient(ellipse 480px 450px at 47% 54%, #417f70 0%, #387168 25%, #2c6060 48%, #235357 68%, #164252 88%, #0f3847 100%);
}
.ribbon-mark {
  position: absolute;
  top: 0;
  left: 788px;
  width: 51px;
  height: 86px;
  background: #b01513;
  box-shadow: 0 2px 3px rgba(0, 0, 0, 0.5);
}
h1 {
  position: absolute;
  top: 192px;
  left: 94px;
  margin: 0;
  font-family: Lato, sans-serif;
  font-size: 67px;
  font-weight: 300;
  line-height: 83px;
  color: #ebebeb;
  -webkit-text-stroke: 1px #ebebeb;
  white-space: nowrap;
}
.textbox {
  position: absolute;
  top: 359px;
  left: 86px;
  width: 668px;
  height: 67px;
  border: 1px dotted #a3b8b6;
}
.textbox p {
  display: flex;
  align-items: center;
  margin: 4px 0 0 7px;
  font-family: Lato, sans-serif;
  font-size: 19px;
  font-weight: 300;
  line-height: 24px;
  color: #8ad6d6;
  white-space: nowrap;
}
.cursor {
  width: 1px;
  height: 23px;
  background: #b08a8a;
}
.handle {
  position: absolute;
  width: 12px;
  height: 12px;
  margin: -6px;
  border: 2px solid #8a8f90;
  border-radius: 50%;
  background: #fff;
}
.nw, .n, .ne { top: 0; }
.w, .e { top: 50%; }
.sw, .s, .se { top: 100%; }
.nw, .w, .sw { left: 0; }
.n, .s { left: 50%; }
.ne, .e, .se { left: 100%; }
.stem {
  position: absolute;
  left: 50%;
  top: -24px;
  width: 1px;
  height: 20px;
  background: #a5b3b2;
}
.rotate {
  position: absolute;
  left: 50%;
  top: -45px;
  margin-left: -11px;
}

/* status bar */
.status {
  display: flex;
  align-items: center;
  justify-content: flex-end;
  height: 24px;
  padding: 3px 5px 0 0;
  background: linear-gradient(#e6e6e6 2px, #c4c4c4 2px, #c4c4c4 3px, #f3f2f1 3px);
  font-size: 11px;
}
.notes {
  gap: 2px;
  margin-right: 19px;
}
.view {
  width: 40px;
  height: 21px;
}
.view.on {
  background: #c8c6c4;
}
.step {
  width: 19px;
  height: 20px;
}
.zoom {
  width: 100px;
  height: 20px;
  margin: 0;
  appearance: none;
  background:
    linear-gradient(#aaa, #aaa) 50px 50% / 1px 5px no-repeat,
    linear-gradient(#b3b1af, #b3b1af) 0 50% / 100% 1px no-repeat;
}
.zoom::-webkit-slider-thumb {
  appearance: none;
  width: 5px;
  height: 11px;
  background: #6b6967;
}
.percent {
  width: 42px;
  text-align: center;
}

/* taskbar */
.taskbar {
  display: flex;
  gap: 1px;
  height: 40px;
  background: linear-gradient(90deg, #481b22 13%, #422a28 24%, #45302a 38%, #3d2622 50%, #3c2020 60%, #24252a 68%, #1b3035 73%, #213d40 100%);
}
.search {
  width: 141px;
  padding: 0;
  border: 1px solid #b5b5b5;
  border-left: 0;
  border-radius: 0;
  background: #f0f0f0;
}
.task {
  flex: none;
  width: 48px;
}
.open {
  background: linear-gradient(#83b3dd, #83b3dd) center bottom / 40px 2px no-repeat;
}
.active.task {
  background: linear-gradient(#83b3dd, #83b3dd) center bottom / 100% 2px no-repeat, #655350;
}
.tray {
  display: flex;
  align-items: center;
  gap: 6px;
  margin-left: auto;
  color: #fff;
}
.tray .help {
  margin-right: 1px;
}
.clock {
  display: flex;
  flex-direction: column;
  width: 64px;
  text-align: center;
  font-size: 11px;
  line-height: 18px;
}
.notif {
  position: relative;
  width: 40px;
  height: 40px;
}
.notif svg {
  margin-right: 8px;
}
.notif b {
  position: absolute;
  left: 17px;
  top: 18px;
  width: 18px;
  height: 18px;
  border: 1px solid #8b9799;
  border-radius: 50%;
  background: #2a3a3d;
  font-size: 11px;
  font-weight: 400;
  line-height: 16px;
  color: #fff;
}
.desktop {
  width: 4px;
  height: 40px;
  border-left: 1px solid #7d8d8f;
}
</style>
